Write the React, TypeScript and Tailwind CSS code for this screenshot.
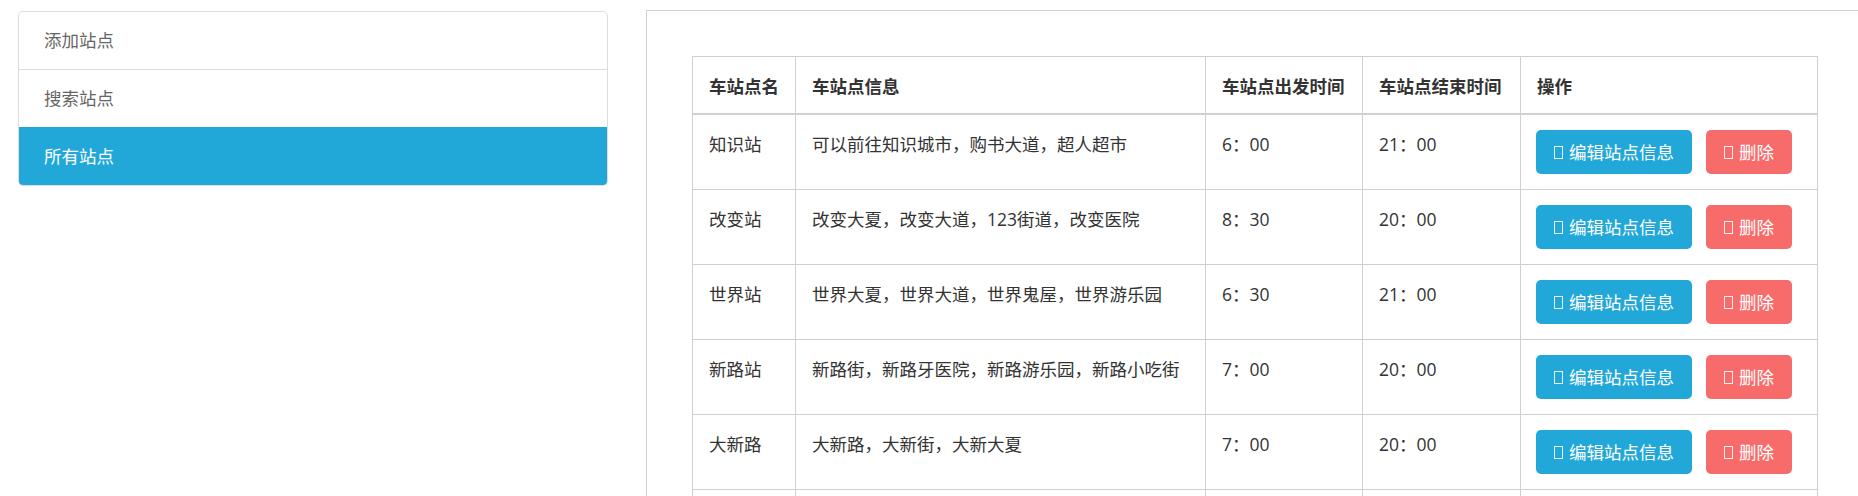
import React from "react"

const menu = [
  { label: "添加站点", active: false, h: "h-[58px]" },
  { label: "搜索站点", active: false, h: "h-[57px]" },
  { label: "所有站点", active: true, h: "h-[58px]" },
]

const stations = [
  { name: "知识站", info: "可以前往知识城市，购书大道，超人超市", start: "6：00", end: "21：00" },
  { name: "改变站", info: "改变大夏，改变大道，123街道，改变医院", start: "8：30", end: "20：00" },
  { name: "世界站", info: "世界大夏，世界大道，世界鬼屋，世界游乐园", start: "6：30", end: "21：00" },
  { name: "新路站", info: "新路街，新路牙医院，新路游乐园，新路小吃街", start: "7：00", end: "20：00" },
  { name: "大新路", info: "大新路，大新街，大新大夏", start: "7：00", end: "20：00" },
]

function Tofu() {
  return <span className="inline-block w-[9px] h-[13px] border border-white/90 mr-[6px] align-[-1px]" />
}

const cell = "border border-[#d0d0d0] pl-[16px] pt-[15px] pb-[15px] align-top"

export default function App() {
  return (
    <div
      className="h-screen overflow-hidden bg-white flex pt-[10px] text-[17.5px] text-[#333]"
      style={{ fontFamily: '"Open Sans", "Noto Sans CJK SC", sans-serif' }}
    >
      <div className="ml-[18px] w-[590px] shrink-0 mt-[1px] self-start">
        <div className="border border-[#ddd] rounded-[5px] overflow-hidden">
          {menu.map((item, i) => (
            <div
              key={item.label}
              className={
                item.active
                  ? item.h + " flex items-center pl-[25px] bg-[#22a8d8] text-white"
                  : item.h + " flex items-center pl-[25px] text-[#666]" + (i === 0 ? " border-b border-[#ddd]" : "")
              }
            >
              {item.label}
            </div>
          ))}
        </div>
      </div>

      <div className="ml-[38px] flex-1 border-t border-l border-[#d0d0d0] pt-[45px] pl-[45px]">
        <table className="table-fixed border-collapse w-[1125px] leading-[28px]">
          <colgroup>
            <col className="w-[103px]" />
            <col className="w-[410px]" />
            <col className="w-[157px]" />
            <col className="w-[158px]" />
            <col className="w-[297px]" />
          </colgroup>
          <thead>
            <tr>
              {["车站点名", "车站点信息", "车站点出发时间", "车站点结束时间", "操作"].map((h) => (
                <th
                  key={h}
                  className="text-left font-bold border border-[#d0d0d0] border-b-2 pl-[16px] pt-[15px] pb-[13px] align-top"
                >
                  {h}
                </th>
              ))}
            </tr>
          </thead>
          <tbody>
            {stations.map((s) => (
              <tr key={s.name}>
                <td className={cell + " h-[75px]"}>{s.name}</td>
                <td className={cell}>{s.info}</td>
                <td className={cell}>{s.start}</td>
                <td className={cell}>{s.end}</td>
                <td className="border border-[#d0d0d0] pl-[15px] pt-[15px] pb-[15px] align-top">
                  <div className="flex gap-[14px]">
                    <button className="h-[44px] px-[18px] rounded-[5px] bg-[#22a8d8] text-white flex items-center whitespace-nowrap">
                      <Tofu />
                      编辑站点信息
                    </button>
                    <button className="h-[44px] px-[18px] rounded-[5px] bg-[#f86b6b] text-white flex items-center whitespace-nowrap">
                      <Tofu />
                      删除
                    </button>
                  </div>
                </td>
              </tr>
            ))}
            <tr>
              <td className={cell + " h-[75px]"} />
              <td className={cell} />
              <td className={cell} />
              <td className={cell} />
              <td className={cell} />
            </tr>
          </tbody>
        </table>
      </div>
    </div>
  )
}
